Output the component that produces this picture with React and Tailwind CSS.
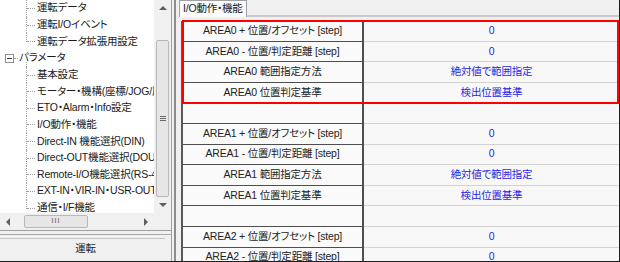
import React from 'react'

const treeItems = [
  { label: '運転データ', level: 1 },
  { label: '運転I/Oイベント', level: 1 },
  { label: '運転データ拡張用設定', level: 1, last: true },
  { label: 'パラメータ', level: 0 },
  { label: '基本設定', level: 1 },
  { label: 'モーター・機構(座標/JOG/原', level: 1 },
  { label: 'ETO・Alarm・Info設定', level: 1 },
  { label: 'I/O動作・機能', level: 1 },
  { label: 'Direct-IN 機能選択(DIN)', level: 1 },
  { label: 'Direct-OUT機能選択(DOUT', level: 1 },
  { label: 'Remote-I/O機能選択(RS-4', level: 1 },
  { label: 'EXT-IN・VIR-IN・USR-OUT機', level: 1 },
  { label: '通信・I/F機能', level: 1, last: true },
]

const rows = [
  ['AREA0 + 位置/オフセット [step]', '0'],
  ['AREA0 - 位置/判定距離 [step]', '0'],
  ['AREA0 範囲指定方法', '絶対値で範囲指定'],
  ['AREA0 位置判定基準', '検出位置基準'],
  ['', ''],
  ['AREA1 + 位置/オフセット [step]', '0'],
  ['AREA1 - 位置/判定距離 [step]', '0'],
  ['AREA1 範囲指定方法', '絶対値で範囲指定'],
  ['AREA1 位置判定基準', '検出位置基準'],
  ['', ''],
  ['AREA2 + 位置/オフセット [step]', '0'],
  ['AREA2 - 位置/判定距離 [step]', '0'],
]

function Arrow({ dir }) {
  const pts = {
    up: '0,4 4,0 8,4',
    down: '0,0 8,0 4,4',
    left: '4,0 4,8 0,4',
    right: '0,0 0,8 4,4',
  }[dir]
  const vert = dir === 'up' || dir === 'down'
  return (
    <svg width={vert ? 8 : 4} height={vert ? 4 : 8} viewBox={vert ? '0 0 8 4' : '0 0 4 8'}>
      <polygon points={pts} fill="#606060" />
    </svg>
  )
}

function TreeRow({ item }) {
  if (item.level === 0) {
    return (
      <div className="relative flex h-[16.65px] items-center whitespace-nowrap pl-[19px]">
        <span className="absolute left-[26px] top-[12px] bottom-0 border-l border-dotted border-[#a0a0a0]" />
        <span className="absolute left-[5px] top-[4px] flex h-[9px] w-[9px] items-center justify-center border border-[#919191] bg-white">
          <span className="h-px w-[5px] bg-[#3a3a3a]" />
        </span>
        <span className="absolute left-[14px] top-[8px] w-[4px] border-t border-dotted border-[#a0a0a0]" />
        {item.label}
      </div>
    )
  }
  return (
    <div className="relative flex h-[16.65px] items-center whitespace-nowrap pl-[37px]">
      <span
        className={
          'absolute left-[26px] top-0 border-l border-dotted border-[#a0a0a0] ' +
          (item.last ? 'h-[9px]' : 'bottom-0')
        }
      />
      <span className="absolute left-[27px] top-[8px] w-[8px] border-t border-dotted border-[#a0a0a0]" />
      {item.label}
    </div>
  )
}

export default function App() {
  return (
    <div
      className="flex h-[262px] w-[620px] overflow-hidden border-r border-b border-[#1e1e1e] bg-[#f0f0f0] text-[10.5px] tracking-[-0.2px] text-[#1a1a1a] [font-feature-settings:'palt']"
      style={{ fontFamily: '"Liberation Sans", "Noto Sans CJK JP", sans-serif' }}
    >
      {/* left navigation */}
      <div className="flex w-[172px] flex-col border-r border-[#a0a0a0]">
        <div className="flex h-[231px] border-b border-[#a0a0a0]">
          <div className="flex w-[154px] flex-col">
            <div className="flex-1 overflow-hidden bg-white">
              {treeItems.map((item, i) => (
                <TreeRow key={i} item={item} />
              ))}
            </div>
            <div className="flex h-[17px] items-center bg-[#f0f0f0] px-[6px]">
              <Arrow dir="left" />
              <div className="ml-[14px] flex h-[13px] w-[64px] items-center justify-center rounded-[2px] border border-[#b8b8b8] bg-[#e6e6e6]">
                <span className="text-[7px] tracking-[1px] text-[#555]">III</span>
              </div>
              <div className="flex-1" />
              <Arrow dir="right" />
            </div>
          </div>
          <div className="flex w-[17px] flex-col bg-[#f0f0f0]">
            <div className="flex h-[16px] items-center justify-center">
              <Arrow dir="up" />
            </div>
            <div className="mx-[2px] mt-[24px] flex h-[157px] flex-col items-center justify-center rounded-[2px] border border-[#b8b8b8] bg-[#e6e6e6]">
              <span className="h-px w-[6px] bg-[#6a6a6a]" />
              <span className="mt-[1px] h-px w-[6px] bg-[#6a6a6a]" />
              <span className="mt-[1px] h-px w-[6px] bg-[#6a6a6a]" />
            </div>
            <div className="flex h-[16px] items-center justify-center">
              <Arrow dir="down" />
            </div>
          </div>
        </div>
        <div className="flex flex-1 flex-col">
          <div className="mt-[3px] h-px bg-[#a8a8a8]" />
          <div className="mr-[6px] mt-[3px] h-px bg-[#c4c4c4]" />
          <div className="flex flex-1 items-center justify-center pb-[2px]">運転</div>
        </div>
      </div>

      {/* splitter */}
      <div className="w-[2px]" />
      <div className="w-[2px] bg-[#8c8c8c]" />

      {/* right content */}
      <div className="flex flex-1 flex-col pl-[3px]">
        <div className="flex h-[19px] items-end">
          <div className="flex h-[17px] items-center border-x border-t border-[#a0a0a0] bg-[#fbfbfb] px-[3px] pb-[1px]">
            I/O動作・機能
          </div>
          <div className="h-[2px] flex-1 bg-[#c9c9c9]" />
        </div>
        <div className="relative ml-[2px] mt-[4px] flex flex-col border-l-2 border-[#5a5a5a]">
          {rows.map(([label, value], i) => (
            <div key={i} className="flex h-[20.6px] shrink-0">
              <div className="flex w-[181px] items-center justify-center whitespace-nowrap border-r-2 border-b border-[#4e4e4e] bg-[#fafafa] text-[#222]">
                {label}
              </div>
              <div className="flex flex-1 items-center justify-center border-b border-[#d2d2d2] bg-[#f8f8f8] text-[#1f1fe6]">
                {value}
              </div>
            </div>
          ))}
          <div className="pointer-events-none absolute left-[-1px] right-0 top-[-1px] h-[84px] border-2 border-[#ff0000]" />
        </div>
      </div>
    </div>
  )
}
